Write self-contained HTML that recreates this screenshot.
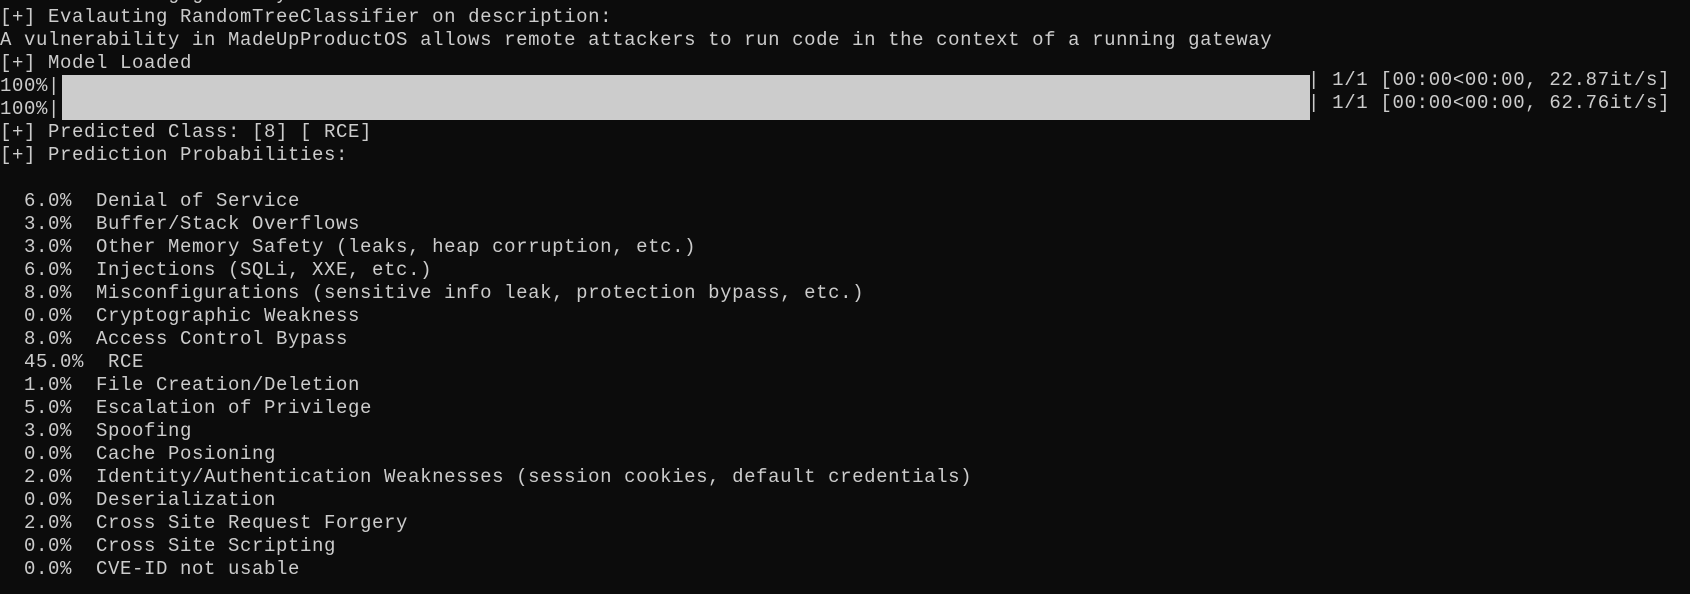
<!DOCTYPE html>
<html><head><meta charset="utf-8"><style>
html,body{margin:0;padding:0;background:#0c0c0c;width:1690px;height:594px;overflow:hidden}
pre{position:absolute;left:0;top:-16.6px;margin:0;font-family:"Liberation Mono",monospace;font-size:19px;letter-spacing:0.6px;line-height:23px;color:#cccccc;white-space:pre}
#r{left:1308px;top:69.4px;letter-spacing:0.67px}
#bar{position:absolute;left:62px;top:74.5px;width:1248px;height:45.5px;background:#cccccc}
</style></head><body>
<pre>              g g      y
[+] Evalauting RandomTreeClassifier on description:
A vulnerability in MadeUpProductOS allows remote attackers to run code in the context of a running gateway
[+] Model Loaded
100%|
100%|
[+] Predicted Class: [8] [ RCE]
[+] Prediction Probabilities:

  6.0%  Denial of Service
  3.0%  Buffer/Stack Overflows
  3.0%  Other Memory Safety (leaks, heap corruption, etc.)
  6.0%  Injections (SQLi, XXE, etc.)
  8.0%  Misconfigurations (sensitive info leak, protection bypass, etc.)
  0.0%  Cryptographic Weakness
  8.0%  Access Control Bypass
  45.0%  RCE
  1.0%  File Creation/Deletion
  5.0%  Escalation of Privilege
  3.0%  Spoofing
  0.0%  Cache Posioning
  2.0%  Identity/Authentication Weaknesses (session cookies, default credentials)
  0.0%  Deserialization
  2.0%  Cross Site Request Forgery
  0.0%  Cross Site Scripting
  0.0%  CVE-ID not usable</pre>
<div id="bar"></div>
<pre id="r">| 1/1 [00:00&lt;00:00, 22.87it/s]
| 1/1 [00:00&lt;00:00, 62.76it/s]</pre>
</body></html>
